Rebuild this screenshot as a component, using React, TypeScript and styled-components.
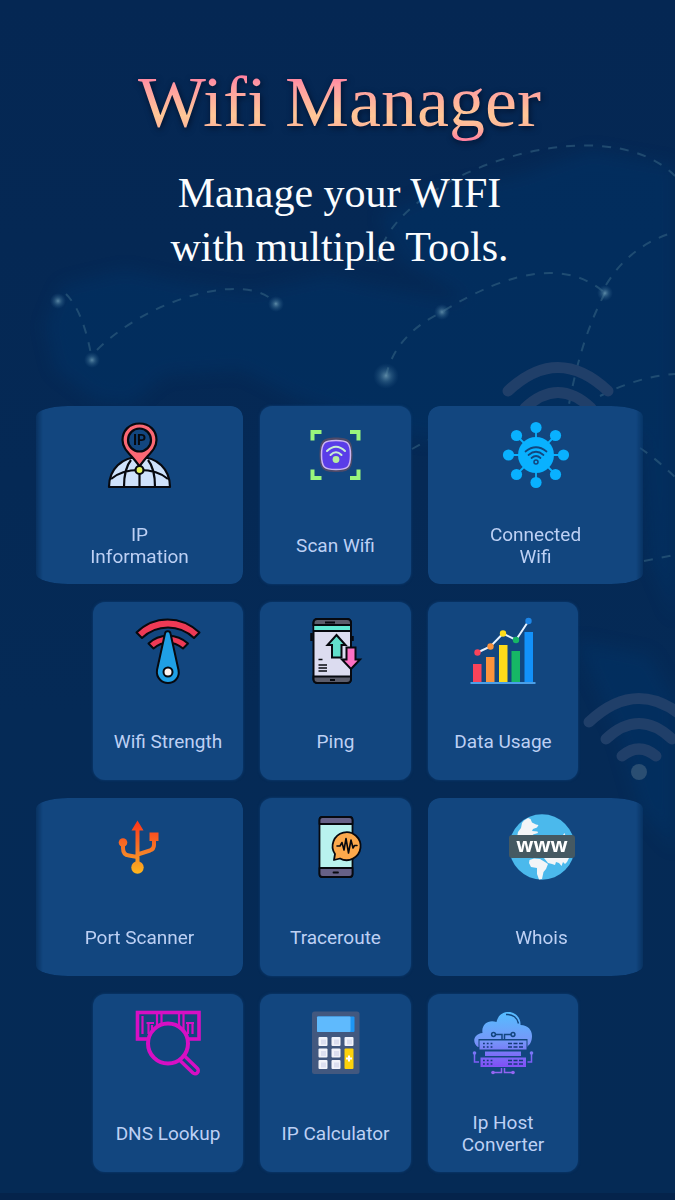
import React from 'react';
import styled, { createGlobalStyle } from 'styled-components';

const CARD = '#12467f';
const INK = '#07090f';

const GlobalStyle = createGlobalStyle`
  * { box-sizing: border-box; }
  body { margin: 0; background: #052a56; }
`;

const Page = styled.main`
  position: relative;
  min-height: 100vh;
  padding: 60px 32px 21px 36px;
  overflow: hidden;
  background: linear-gradient(180deg, #052753 0%, #052a56 60%, #052a55 100%);
  border-bottom: 7px solid #05234b;
`;

const Backdrop = styled.svg`
  position: absolute;
  inset: 0;
  width: 100%;
  height: 100%;
`;

const Header = styled.header`
  position: relative;
  text-align: center;
  font-family: 'Liberation Serif', serif;
`;

const Title = styled.h1`
  margin: 0;
  font-size: 72px;
  font-weight: 400;
  line-height: 84px;
  background: linear-gradient(180deg, #ff7aa0 16%, #ff9aa2 30%, #ffc796 66%, #ffb79a 80%, #ff7fa0 96%);
  background-clip: text;
  -webkit-background-clip: text;
  color: transparent;
  filter: drop-shadow(1px 2px 3px rgba(0, 8, 30, 0.75));
`;

const Subtitle = styled.p`
  margin: 22px 0 0;
  font-size: 42px;
  line-height: 54px;
  color: #fbfdff;
`;

const ToolGrid = styled.section`
  position: relative;
  display: grid;
  grid-template-columns: 57fr 150fr 17fr 151fr 17fr 150fr 65fr;
  grid-auto-rows: minmax(178px, auto);
  row-gap: 18px;
  margin-top: 132px;
`;

type Place = 'left' | 'wideLeft' | 'middle' | 'right' | 'wideRight';

const columns: Record<Place, string> = {
  left: '2 / 3',
  wideLeft: '1 / 3',
  middle: '4 / 5',
  right: '6 / 7',
  wideRight: '6 / 8',
};

const corners: Record<Place, string> = {
  left: '12px',
  wideLeft: '32px 12px 12px 32px / 10px 12px 12px 10px',
  middle: '12px',
  right: '12px',
  wideRight: '12px 32px 32px 12px / 12px 10px 10px 12px',
};

const fades: Record<Place, string> = {
  left: 'none',
  wideLeft: 'linear-gradient(90deg, rgba(0, 0, 0, 0.3) 0, #000 7px)',
  middle: 'none',
  right: 'none',
  wideRight: 'linear-gradient(270deg, rgba(0, 0, 0, 0.3) 0, #000 7px)',
};

const ToolCard = styled.button<{ $place: Place; $lead: number }>`
  grid-column: ${(p) => columns[p.$place]};
  display: flex;
  flex-direction: column;
  align-items: center;
  gap: 36px;
  padding: 16px 0 16px ${(p) => p.$lead}px;
  border: 0;
  border-radius: ${(p) => corners[p.$place]};
  mask-image: ${(p) => fades[p.$place]};
  background: ${CARD};
  box-shadow: 0 0 3px rgba(18, 70, 127, 0.8);
  cursor: pointer;
`;

const Glyph = styled.svg`
  flex: none;
  width: 66px;
  height: 66px;
  overflow: visible;
`;

const Label = styled.span`
  display: flex;
  align-items: center;
  min-height: 44px;
  font-family: Roboto, sans-serif;
  font-size: 19px;
  line-height: 22px;
  white-space: pre-line;
  text-align: center;
  color: #bdd0f4;
`;

const IpPin = () => (
  <g stroke={INK} strokeWidth="2.2" strokeLinejoin="round">
    <path d="M2 65C2 47 15 35 32.5 35S63 47 63 65Z" fill="#cfe2fb" />
    <path d="M17 65C17 54 19 44 24 38M48 65C48 54 46 44 41 38M32.500 52V65M4 57C12 50 22 48 32.500 48S53 50 61 57" fill="none" />
    <path d="M32.500 1.500C22 1.500 15.500 9 15.500 18C15.500 28 25 33 32.500 44.500C40 33 49.500 28 49.500 18C49.500 9 43 1.500 32.500 1.500Z" fill="#fb6874" />
    <circle cx="32.500" cy="18" r="11.500" fill={CARD} />
    <circle cx="32.500" cy="48" r="4" fill="#e4f35c" />
    <text x="32.500" y="23" textAnchor="middle" fontFamily="Roboto, sans-serif" fontSize="14" fontWeight="700" fill={INK} stroke="none">IP</text>
  </g>
);

const ScanFrame = () => (
  <g fill="none">
    <path d="M9.500 18.500V10H18.500M47 10H55.500V18.500M55.500 47.500V56H47M18.500 56H9.500V47.500" stroke="#9af57c" strokeWidth="4" />
    <path d="M33 15.500C46.500 15.500 49.500 19 49.500 33S46.500 50 33 50S16.500 47 16.500 33S19.500 15.500 33 15.500Z" fill="#4e4a68" />
    <path d="M33 18.500C44.500 18.500 47.500 20.500 47.500 33S44.500 47.500 33 47.500S18.500 45.500 18.500 33S21.500 18.500 33 18.500Z" fill="#5a3de8" stroke="#cdb6f2" strokeWidth="1.500" />
    <path d="M24 29Q33 20.500 42 29M27.500 33Q33 27.500 38.500 33" stroke="#c8eed4" strokeWidth="2" strokeLinecap="round" />
    <circle cx="33" cy="37.500" r="3.400" fill="#b7ee9c" />
  </g>
);

const HubWifi = () => (
  <g fill="#09b1ff">
    <path d="M33 5V61M5 33H61M13.500 13.500L52.500 52.500M52.500 13.500L13.500 52.500" stroke="#09b1ff" strokeWidth="1.800" />
    <circle cx="33" cy="33" r="18" />
    {[[33, 5.5], [52.5, 13.5], [60.5, 33], [52.5, 52.5], [33, 60.5], [13.5, 52.5], [5.5, 33], [13.5, 13.5]].map(([x, y]) => (
      <circle key={`${x}-${y}`} cx={x} cy={y} r="5.600" />
    ))}
    <path d="M22.500 29.500Q33 21 43.500 29.500M25.500 33Q33 26.500 40.500 33M28.500 36Q33 32 37.500 36" fill="none" stroke={CARD} strokeWidth="1.700" strokeLinecap="round" />
    <circle cx="33" cy="40" r="2" fill="none" stroke={CARD} strokeWidth="1.500" />
  </g>
);

const StrengthGauge = () => (
  <g stroke={INK} strokeWidth="2" strokeLinejoin="round">
    <path d="M1.500 14.500C19 -3 46 -3 64.500 14.500L59 20C44 6 22 6 7 20Z" fill="#ee3a55" />
    <path d="M13.500 25.500C24 15 42 15 53 25.500L48 30.500C38 22.500 28 22.500 18.500 30.500Z" fill="#ee3a55" />
    <path d="M30 15.500C30.500 12.500 35 12.500 35.500 15.500L43.500 52C45 60 39 65 33 65S21 60 22 52Z" fill="#1fa0e6" />
    <circle cx="33" cy="54" r="4.500" fill="#fff3f0" />
  </g>
);

const PingPhone = () => (
  <g stroke={INK} strokeWidth="2" strokeLinejoin="miter">
    <path d="M8.500 15V23M49.500 18V23" strokeWidth="2.500" />
    <rect x="10.500" y="1" width="37.500" height="64" rx="4" fill="#dcdcf0" />
    <path d="M10.500 7V5Q10.500 1 14.500 1H44Q48 1 48 5V7ZM10.500 58.500H48V61Q48 65 44 65H14.500Q10.500 65 10.500 61Z" fill="#5c5d6b" />
    <rect x="11.500" y="8" width="35.500" height="4" fill="#62ead4" stroke="none" />
    <path d="M10.500 13H48M22 4.500H32M27 62H32" />
    <path d="M15.500 41.500H19.500M15.500 47H24M15.500 50H24M15.500 53H24" strokeWidth="1.700" />
    <path d="M33.500 17L42.500 27H38.500V39.500H29V27H24.500Z" fill="#61dfcb" />
    <path d="M43.500 29.500H52.500V41.500H57L48 51L39 41.500H43.500Z" fill="#ff70c4" />
  </g>
);

const UsageChart = () => (
  <g>
    <path d="M0.500 65H65.500" stroke="#4a9fe8" strokeWidth="2" />
    <rect x="3" y="46" width="8.500" height="18" fill="#f9435a" />
    <rect x="16" y="39" width="8.500" height="25" fill="#fb933c" />
    <rect x="29" y="27" width="8.500" height="37" fill="#fddb1a" />
    <rect x="41.500" y="33" width="8.500" height="31" fill="#16b765" />
    <rect x="54.500" y="14" width="8.500" height="50" fill="#1291fa" />
    <path d="M7.500 34.500L20.500 28.500L33 15.500L46 22L58.500 3" fill="none" stroke="#e9f3ff" strokeWidth="2" />
    <circle cx="7.500" cy="34.500" r="3.200" fill="#f9435a" />
    <circle cx="20.500" cy="28.500" r="3.200" fill="#fb933c" />
    <circle cx="33" cy="15.500" r="3.200" fill="#fddb1a" />
    <circle cx="46" cy="22" r="3.200" fill="#16b765" />
    <circle cx="58.500" cy="3" r="3.200" fill="#1d86e8" />
  </g>
);

const UsbPort = () => (
  <g>
    <linearGradient id="usb" gradientUnits="userSpaceOnUse" x1="0" y1="7" x2="0" y2="59">
      <stop offset="0" stopColor="#ff3418" />
      <stop offset="0.600" stopColor="#f57e28" />
      <stop offset="1" stopColor="#ffb41c" />
    </linearGradient>
    <path d="M30.500 14V52M16 28V34Q16 41 22 41.500L30.500 43M47 25V31Q47 35 43 36.500L30.500 40.500" fill="none" stroke="url(#usb)" strokeWidth="4" />
    <path d="M30.500 6.500L36.500 16.500H24.500ZM42.500 18.500H51.500V27H42.500Z" fill="url(#usb)" />
    <circle cx="16" cy="28.500" r="4.300" fill="url(#usb)" />
    <circle cx="30.500" cy="53.500" r="6.200" fill="url(#usb)" />
  </g>
);

const TracePhone = () => (
  <g stroke={INK} strokeWidth="1.800" strokeLinejoin="round" strokeLinecap="round">
    <rect x="16.500" y="3" width="33" height="60" rx="3" fill="#b9f3ee" />
    <path d="M16.500 10V6Q16.500 3 19.500 3H46.500Q49.500 3 49.500 6V10ZM16.500 54H49.500V60Q49.500 63 46.500 63H19.500Q16.500 63 16.500 60Z" fill="#666187" />
    <path d="M30.500 58.500H35" />
    <path d="M31 46L32 40A14 14 0 1 1 37 44.500Z" fill="#fda94c" />
    <path d="M34 32H37L39 28.500L41 36L43 24.500L45.500 39L48 26L50 34L51.500 31.500H54" fill="none" strokeWidth="1.600" />
  </g>
);

const WwwGlobe = () => (
  <g>
    <circle cx="33" cy="33" r="32.700" fill="#4bb9ec" />
    <path d="M15 6.500L19 4L21.500 5L23 8.500L27 10.500L29.500 11L28 13.500L24 15L23 17L28.500 17.500L29 19L24 20.500L23 23H8L9 18L12 14L13 9ZM20.500 46L25 44.500L31 45L36 48L39 50L37 55L34.500 58L33 65L30 65.500L28 60L28 54L22 53L20 49ZM35 44H60L58 48L56 50L54 48L52.500 52L50 49L47 48L46 51L43 50L39 49ZM54 21L55.500 19L56.500 22Z" fill="#f3f5f7" />
    <rect x="0" y="21" width="66" height="23" rx="3" fill="#455962" />
    <text x="33" y="38" textAnchor="middle" fontFamily="'Open Sans', sans-serif" fontSize="20" fontWeight="700" fill="#ffffff">www</text>
  </g>
);

const DnsLens = () => (
  <g stroke="#d60fc4" fill="none" strokeWidth="3.600">
    <rect x="2.500" y="2.500" width="61.500" height="26.500" />
    <path d="M7.500 6V24M13.500 13V24M17 15V24M22 4V22M26.500 4V17M44 4V18M48.500 4V22M53 14V24M57.500 13V24M11.500 13H19M51 13H59" strokeWidth="2.200" />
    <path d="M47 48L60 60.500" strokeWidth="10" strokeLinecap="round" />
    <path d="M47 48L60 60.500" stroke={CARD} strokeWidth="3" strokeLinecap="round" />
    <circle cx="33" cy="33.500" r="20" fill={CARD} strokeWidth="4" />
  </g>
);

const Calculator = () => (
  <g fill="#f2f3fa">
    <rect x="9" y="1.500" width="47.500" height="62.500" rx="2.500" fill="#42587f" />
    <rect x="14" y="6.500" width="37.500" height="15.500" rx="1" fill="#1e96f3" />
    <rect x="14" y="6.500" width="33.500" height="15.500" rx="1" fill="#5fbafd" />
    {[[15.5, 27], [28.5, 27], [41.5, 27], [15.5, 38.5], [28.5, 38.5], [15.5, 50], [28.5, 50]].map(([x, y]) => (
      <g key={`${x}-${y}`}>
        <rect x={x} y={y} width="9" height="9" rx="1" />
        <rect x={x + 2.5} y={y + 2.5} width="5" height="5" fill="#dcdff0" />
      </g>
    ))}
    <rect x="41.500" y="38.500" width="9" height="20.500" rx="1" fill="#fdd20c" />
    <path d="M46 45.500V51.500M43 48.500H49" stroke="#ffffff" strokeWidth="2" />
  </g>
);

const CloudHost = () => (
  <g>
    <linearGradient id="host" gradientUnits="userSpaceOnUse" x1="0" y1="2" x2="0" y2="65">
      <stop offset="0" stopColor="#55bdff" />
      <stop offset="0.450" stopColor="#7598f8" />
      <stop offset="0.850" stopColor="#8052f6" />
      <stop offset="1" stopColor="#9a6cf0" />
    </linearGradient>
    <path d="M8 37C2 33 3 24 12.500 23C11 14 19 9 26.500 12C28 5 33 2 38.500 2C45.500 2 51 8 50.500 15C58 15 62 20 62 26C62 31 60 35 57.500 36V37Z" fill="url(#host)" />
    <path d="M36 4.500C43 4 47.500 8 48.500 13.500M25 24.500H32V30M41 24.500H34.500V30" fill="none" stroke={CARD} strokeWidth="1.500" />
    <circle cx="23.500" cy="24.500" r="1.900" fill="none" stroke={CARD} strokeWidth="1.500" />
    <circle cx="43" cy="24.500" r="1.900" fill="none" stroke={CARD} strokeWidth="1.500" />
    <rect x="8.500" y="29" width="49" height="12" fill={CARD} />
    <path d="M9.500 30.500H56.500V39.500H9.500ZM15 41.500H51V46H15ZM10.500 47.500H56V57H10.500Z" fill="url(#host)" />
    <path d="M13 33.500H23M13 37H23M13 50.500H23M13 54H23" stroke="#123a78" strokeWidth="1.700" strokeDasharray="1.800 2" />
    <path d="M38 33.500H53M38 37H53M38 50.500H53M38 54H53" stroke="#123a78" strokeWidth="1.500" strokeDasharray="4 1.500" />
    <path d="M4.500 43V52H9M61.500 43V52H57.500M23 62.500H31.500V58M43 62.500H34.500V58" fill="none" stroke="url(#host)" strokeWidth="1.500" />
    {[[4.5, 43], [61.5, 43], [23, 62.5], [43, 62.5]].map(([x, y]) => (
      <circle key={`${x}-${y}`} cx={x} cy={y} r="1.800" fill="url(#host)" />
    ))}
  </g>
);

type Tool = { label: string; place: Place; Icon: () => React.JSX.Element; lead?: number };

const tools: Tool[] = [
  { label: 'IP\nInformation', place: 'wideLeft', Icon: IpPin },
  { label: 'Scan Wifi', place: 'middle', Icon: ScanFrame },
  { label: 'Connected\nWifi', place: 'wideRight', Icon: HubWifi },
  { label: 'Wifi Strength', place: 'left', Icon: StrengthGauge },
  { label: 'Ping', place: 'middle', Icon: PingPhone },
  { label: 'Data Usage', place: 'right', Icon: UsageChart },
  { label: 'Port Scanner', place: 'wideLeft', Icon: UsbPort },
  { label: 'Traceroute', place: 'middle', Icon: TracePhone },
  { label: 'Whois', place: 'wideRight', Icon: WwwGlobe, lead: 12 },
  { label: 'DNS Lookup', place: 'left', Icon: DnsLens },
  { label: 'IP Calculator', place: 'middle', Icon: Calculator },
  { label: 'Ip Host\nConverter', place: 'right', Icon: CloudHost },
];

const cities = [
  [58, 301, 5],
  [92, 360, 5],
  [276, 304, 5],
  [442, 312, 5],
  [386, 376, 8],
  [605, 293, 5],
];

const Waves = ({ x, y }: { x: number; y: number }) => (
  <g transform={`translate(${x} ${y})`} fill="none" stroke="#203f69" strokeWidth="11" strokeLinecap="round">
    <path d="M-50 -50Q0 -97 50 -50M-33 -33Q0 -64 33 -33M-17 -16Q0 -30 17 -16" />
    <circle cx="0" cy="0" r="8" fill="#2a4e72" stroke="none" />
  </g>
);

const WorldBackdrop = () => (
  <Backdrop viewBox="0 0 675 1200" preserveAspectRatio="xMidYMin slice" aria-hidden="true">
    <defs>
      <radialGradient id="city">
        <stop offset="0" stopColor="#6f9cb5" stopOpacity="0.800" />
        <stop offset="0.450" stopColor="#4d7fa0" stopOpacity="0.400" />
        <stop offset="1" stopColor="#2c5f8c" stopOpacity="0" />
      </radialGradient>
      <filter id="haze" x="-20%" y="-20%" width="140%" height="140%">
        <feGaussianBlur stdDeviation="8" />
      </filter>
    </defs>
    <g fill="#04356a" filter="url(#haze)" opacity="0.420">
      <path d="M62 285L125 270L180 282L250 292L330 275L370 285L450 300L560 275L675 285V440H420L300 400L240 370L165 375L130 405L95 400L55 370L45 325Z" />
      <path d="M380 215L440 190L520 175L590 150L675 165V310L560 290L470 300L400 260Z" />
      <path d="M575 640L650 655L675 700V850L640 810L620 740Z" />
      <path d="M640 430H675V620L650 560Z" />
    </g>
    <g fill="none" stroke="#3c6b88" strokeWidth="2" strokeDasharray="9 9" opacity="0.500">
      <path d="M66 294Q84 312 92 360" />
      <path d="M97 350C150 297 250 270 276 304" />
      <path d="M386 376Q395 335 442 312Q550 245 605 293" />
      <path d="M378 262C385 180 600 100 675 176" />
      <path d="M605 293Q580 340 568 410" />
      <path d="M606 285Q630 245 675 232" />
      <path d="M600 396Q640 376 675 374" />
      <path d="M412 449L428 440" />
      <path d="M640 448Q658 460 680 482" />
      <path d="M644 561L680 554" />
    </g>
    {cities.map(([x, y, r]) => (
      <circle key={`${x}-${y}`} cx={x} cy={y} r={r * 1.6} fill="url(#city)" />
    ))}
    <Waves x={558} y={441} />
    <Waves x={639} y={772} />
  </Backdrop>
);

export default function App() {
  return (
    <>
      <GlobalStyle />
      <Page>
        <WorldBackdrop />
        <Header>
          <Title>Wifi Manager</Title>
          <Subtitle>
            Manage your WIFI
            <br />
            with multiple Tools.
          </Subtitle>
        </Header>
        <ToolGrid aria-label="Tools">
          {tools.map(({ label, place, Icon, lead = 0 }) => (
            <ToolCard key={label} type="button" $place={place} $lead={lead}>
              <Glyph viewBox="0 0 66 66" aria-hidden="true">
                <Icon />
              </Glyph>
              <Label>{label}</Label>
            </ToolCard>
          ))}
        </ToolGrid>
      </Page>
    </>
  );
}
